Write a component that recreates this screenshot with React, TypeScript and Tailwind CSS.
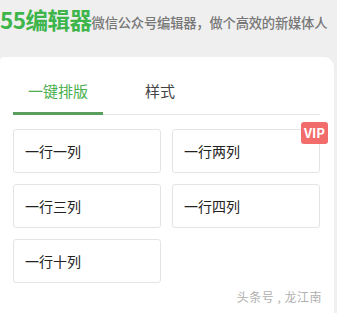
import React from "react";

const items = ["一行一列", "一行两列", "一行三列", "一行四列", "一行十列"];

export default function App() {
  return (
    <div
      className="w-[337px] h-[313px] bg-[#efefef] overflow-hidden"
      style={{ fontFamily: '"Noto Sans CJK SC", "Noto Sans", sans-serif' }}
    >
      <div className="h-[57px] flex items-end pb-[24px] pl-0">
        <span className="text-[22.5px] leading-[27px] font-bold text-[#3db54b] tracking-[-0.5px]">
          55编辑器
        </span>
        <span className="text-[13.3px] leading-[20px] font-medium text-[#777] tracking-[-0.2px]">
          微信公众号编辑器，做个高效的新媒体人
        </span>
      </div>
      <div className="relative w-[334px] h-[256px] bg-white rounded-tr-[10px] rounded-tl-[4px]">
        <div className="mx-[13px] w-[307px] pt-[23px] flex border-b border-[#e6e6e6]">
          <div className="w-[90px] text-center text-[15px] leading-[22px] pb-[10px] text-[#4caf50] border-b-[3px] border-[#5a9e5c] -mb-px">
            一键排版
          </div>
          <div className="pl-[42px] text-[15px] leading-[22px] text-[#444]">样式</div>
        </div>
        <div className="mx-[13px] w-[307px] mt-[14px] grid grid-cols-2 gap-x-[11px] gap-y-[11px]">
          {items.map((t) => (
            <div
              key={t}
              className="h-[44px] border border-[#e4e4e4] rounded-[3px] flex items-center pl-[11px] text-[14px] text-[#222]"
            >
              {t}
            </div>
          ))}
        </div>
        <div className="absolute left-[301px] top-[65px] w-[27px] h-[22px] rounded-[3px] bg-[#f26c6c] text-white text-[13px] font-bold flex items-center justify-center">
          VIP
        </div>
        <div className="absolute right-[12px] top-[231px] text-[12px] text-[#b0b0b0] tracking-[0.5px]">
          头条号 , 龙江南
        </div>
      </div>
    </div>
  );
}
